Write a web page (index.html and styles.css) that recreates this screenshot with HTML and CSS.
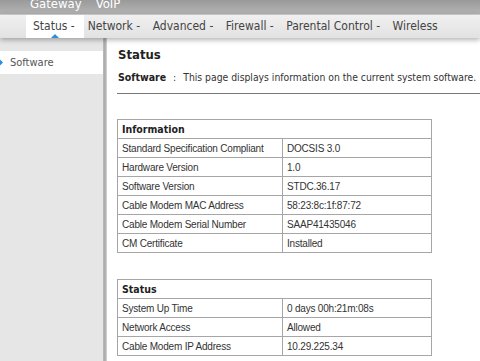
FILE: index.html
```html
<!DOCTYPE html>
<html lang="en">
<head>
  <meta charset="UTF-8" />
  <title>Status - Software</title>
  <link rel="stylesheet" href="styles.css">
</head>
<body>
  <div class="topbar">
    <div class="topmenu">
      <span>Gateway</span>
      <span>VoIP</span>
    </div>
  </div>

  <div class="nav">
    <a class="tab active">Status -</a>
    <a class="tab">Network -</a>
    <a class="tab">Advanced -</a>
    <a class="tab">Firewall -</a>
    <a class="tab">Parental Control -</a>
    <a class="tab">Wireless</a>
  </div>

  <div class="layout">
    <div class="sidebar">
      <div class="side-item">Software</div>
    </div>
    <div class="divider"></div>
    <div class="main">
      <h1 class="title">Status</h1>
      <p class="desc"><b>Software</b><span class="colon">:</span>This page displays information on the current system software.</p>
      <hr class="rule">

      <table class="info">
        <tr><th colspan="2">Information</th></tr>
        <tr><td class="key">Standard Specification Compliant</td><td>DOCSIS 3.0</td></tr>
        <tr><td class="key">Hardware Version</td><td>1.0</td></tr>
        <tr><td class="key">Software Version</td><td>STDC.36.17</td></tr>
        <tr><td class="key">Cable Modem MAC Address</td><td>58:23:8c:1f:87:72</td></tr>
        <tr><td class="key">Cable Modem Serial Number</td><td>SAAP41435046</td></tr>
        <tr><td class="key">CM Certificate</td><td>Installed</td></tr>
      </table>

      <table class="info">
        <tr><th colspan="2">Status</th></tr>
        <tr><td class="key">System Up Time</td><td>0 days 00h:21m:08s</td></tr>
        <tr><td class="key">Network Access</td><td>Allowed</td></tr>
        <tr><td class="key">Cable Modem IP Address</td><td>10.29.225.34</td></tr>
      </table>
    </div>
  </div>
</body>
</html>
```

FILE: styles.css
```css
body {
  margin: 0;
  background: #fff;
  font-family: "DejaVu Sans Condensed", "DejaVu Sans", sans-serif;
  color: #333;
  overflow: hidden;
}

.topbar {
  height: 14px;
  overflow: hidden;
  background: linear-gradient(to bottom, #9a9a9a, #b4b4b4);
}

.topmenu {
  display: flex;
  gap: 14px;
  padding-left: 30px;
  margin-top: -4px;
  font-size: 13px;
  line-height: 16px;
  color: #fff;
}

.nav {
  position: relative;
  z-index: 1;
  display: flex;
  height: 23px;
  padding-left: 26px;
  border-top: 1px solid #c6c6c6;
  background: linear-gradient(to bottom, #f0f0f0, #e2e2e2);
  box-shadow: 0 2px 5px rgba(0, 0, 0, 0.3);
  font-size: 12px;
  line-height: 23px;
}

.tab {
  position: relative;
  padding: 0 6.5px 0 6px;
  color: #444;
  cursor: pointer;
}

.tab:first-child {
  padding-left: 7px;
}

.tab.active {
  background: #fff;
  padding-right: 9px;
}

.tab.active + .tab {
  padding-left: 4px;
}

.tab.active::after {
  content: "";
  position: absolute;
  left: 25px;
  bottom: 0;
  border-left: 4px solid transparent;
  border-right: 4px solid transparent;
  border-bottom: 4px solid #2a8de0;
}

.layout {
  display: flex;
  height: 323px;
}

.sidebar {
  width: 103px;
  padding-top: 13px;
  background: #e6e6e6;
}

.side-item {
  position: relative;
  height: 23px;
  padding-left: 10px;
  background: #fff;
  font-size: 11px;
  line-height: 23px;
  color: #555;
}

.side-item::before {
  content: "";
  position: absolute;
  left: -3px;
  top: 9px;
  width: 5px;
  height: 5px;
  background: #2a8de0;
  transform: rotate(45deg);
}

.divider {
  width: 4px;
  background: linear-gradient(to right, #bcbcbc, #a8a8a8, #d8d8d8);
}

.main {
  flex: 1;
  min-width: 0;
  padding: 9px 0 0 11px;
}

.title {
  margin: 0;
  font-size: 13px;
  line-height: 16px;
  color: #222;
}

.desc {
  margin: 7px 0 0;
  font-size: 10.3px;
  line-height: 14px;
  white-space: nowrap;
  color: #333;
}

.desc b {
  font-size: 10.5px;
  color: #222;
}

.colon {
  padding: 0 7px;
}

.rule {
  margin: 9px 0 0 -1px;
  border: 0;
  border-top: 1px solid #777;
}

.info {
  width: 315px;
  margin: 25px 0 0 -1px;
  border-collapse: collapse;
  font-family: "Liberation Sans", Arial, sans-serif;
  font-size: 10px;
  letter-spacing: -0.2px;
  color: #333;
}

.info + .info {
  margin-top: 26px;
}

.info th,
.info td {
  height: 18px;
  padding: 0 0 0 4px;
  border: 1px solid #a6a6a6;
  text-align: left;
}

.info th {
  font-family: "DejaVu Sans Condensed", sans-serif;
  font-size: 10.5px;
  letter-spacing: 0;
  color: #222;
}

.info .key {
  width: 160px;
}
```
